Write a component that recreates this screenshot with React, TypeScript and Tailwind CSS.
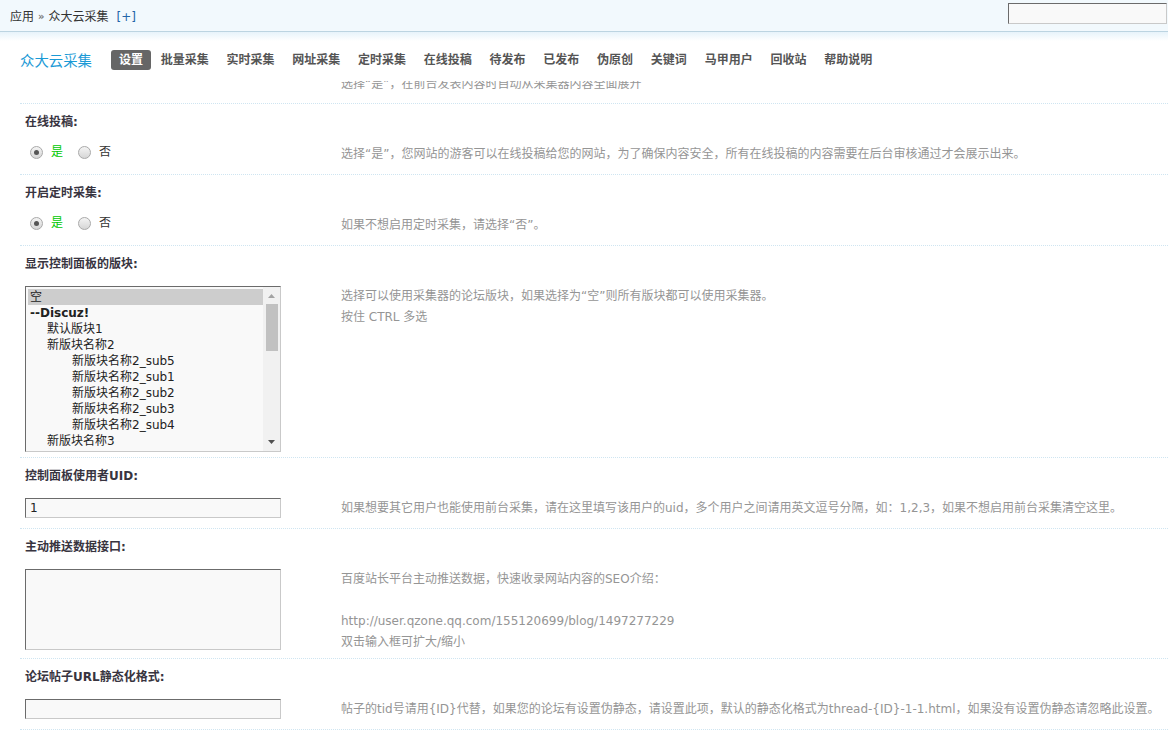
import React from "react";

const tabs = [
  "设置",
  "批量采集",
  "实时采集",
  "网址采集",
  "定时采集",
  "在线投稿",
  "待发布",
  "已发布",
  "伪原创",
  "关键词",
  "马甲用户",
  "回收站",
  "帮助说明",
];

const forums = [
  { t: "空", pad: "pl-[2px]", sel: true },
  { t: "--Discuz!", pad: "pl-[2px]", bold: true },
  { t: "默认版块1", pad: "pl-[19px]" },
  { t: "新版块名称2", pad: "pl-[19px]" },
  { t: "新版块名称2_sub5", pad: "pl-[44px]" },
  { t: "新版块名称2_sub1", pad: "pl-[44px]" },
  { t: "新版块名称2_sub2", pad: "pl-[44px]" },
  { t: "新版块名称2_sub3", pad: "pl-[44px]" },
  { t: "新版块名称2_sub4", pad: "pl-[44px]" },
  { t: "新版块名称3", pad: "pl-[19px]" },
];

const Radio = ({ checked }: { checked?: boolean }) => (
  <span className="w-[13px] h-[13px] rounded-full border border-[#a9a9a9] bg-[linear-gradient(#f4f4f4,#d6d6d6)] flex items-center justify-center">
    {checked && <span className="w-[5px] h-[5px] rounded-full bg-[#555]" />}
  </span>
);

const YesNo = () => (
  <div className="flex items-center h-[16px] pl-[5px]">
    <Radio checked />
    <span className="ml-[8px] text-[#00c800]">是</span>
    <span className="ml-[15px]">
      <Radio />
    </span>
    <span className="ml-[8px] text-[#333]">否</span>
  </div>
);

const boxBorder =
  "border border-t-[#6b6b6b] border-l-[#6b6b6b] border-r-[#c9c9c9] border-b-[#c9c9c9] bg-[#f9f9f9]";

const Row = ({
  label,
  h,
  control,
  tips,
  last,
}: {
  label: string;
  h: string;
  control: React.ReactNode;
  tips: React.ReactNode;
  last?: boolean;
}) => (
  <div
    className={`${h} border-t border-dotted border-[#cfe5f1] ${
      last ? "border-b" : ""
    }`}
  >
    <div className="h-[40px] pt-[9px] pl-[5px] leading-[18px] font-bold text-[#38343f]">
      {label}
    </div>
    <div className="flex items-start">
      <div className="w-[261px] pl-[5px] shrink-0">{control}</div>
      <div className="ml-[60px] leading-[21px] text-[#959595]">{tips}</div>
    </div>
  </div>
);

export default function App() {
  return (
    <div className="w-[1168px] h-[736px] overflow-hidden bg-white text-[12px] font-['DejaVu_Sans','Noto_Sans_CJK_SC',sans-serif]">
      {/* top bar */}
      <div className="h-[32px] bg-[#f2f9fd] border-b border-[#bcd4e1] flex items-start justify-between">
        <div className="pl-[10px] pt-[8px] leading-[18px] text-[#333] flex items-center">
          <span>应用</span>
          <span className="mx-[4px] text-[#777] text-[10px] font-bold">»</span>
          <span>众大云采集</span>
          <span className="ml-[8px] text-[#2366a8]">[+]</span>
        </div>
        <div className={`${boxBorder} w-[159px] h-[21px] mt-[3px] mr-px`} />
      </div>

      {/* nav */}
      <div className="h-[49px] bg-[linear-gradient(#e7f3fa,#fff_9px)] pt-[18px] pl-[20px] flex items-start">
        <span className="text-[14.4px] leading-[20px] text-[#1b9ad6] font-['Noto_Sans_CJK_SC',sans-serif]">
          众大云采集
        </span>
        <div className="ml-[19px] flex gap-[1.75px]">
          {tabs.map((t, i) => (
            <span
              key={t}
              className={`px-[8px] h-[20px] leading-[20px] rounded-[3px] font-bold ${
                i === 0 ? "bg-[#666] text-white" : "text-[#555]"
              }`}
            >
              {t}
            </span>
          ))}
        </div>
      </div>

      {/* settings */}
      <div className="pl-[20px]">
        <div className="h-[22px] overflow-hidden">
          <div className="-mt-[7px] ml-[321px] leading-[21px] text-[#959595]">
            选择“是”，在前台发表内容时自动从采集器内容全面展开
          </div>
        </div>

        <Row
          label="在线投稿:"
          h="h-[71px]"
          control={<YesNo />}
          tips="选择“是”，您网站的游客可以在线投稿给您的网站，为了确保内容安全，所有在线投稿的内容需要在后台审核通过才会展示出来。"
        />
        <Row
          label="开启定时采集:"
          h="h-[71px]"
          control={<YesNo />}
          tips="如果不想启用定时采集，请选择“否”。"
        />
        <Row
          label="显示控制面板的版块:"
          h="h-[212px]"
          control={
            <div className={`${boxBorder} w-[256px] h-[166px] flex p-[2px] pr-0`}>
              <div className="flex-1 text-[#222]">
                {forums.map((f) => (
                  <div
                    key={f.t}
                    className={`h-[16px] leading-[16px] ${f.pad} ${
                      f.sel ? "bg-[#cdcdcd]" : ""
                    } ${f.bold ? "font-bold" : ""}`}
                  >
                    {f.t}
                  </div>
                ))}
              </div>
              <div className="w-[17px] -mt-[2px] -mb-[2px] bg-[#f1f1f1] flex flex-col items-center">
                <svg width="7" height="4" viewBox="0 0 7 4" className="mt-[7px]">
                  <path d="M0 4 L3.5 0 L7 4 Z" fill="#a3a3a3" />
                </svg>
                <div className="w-[12px] h-[47px] mt-[6px] bg-[#c1c1c1]" />
                <div className="flex-1" />
                <svg width="7" height="4" viewBox="0 0 7 4" className="mb-[7px]">
                  <path d="M0 0 L3.5 4 L7 0 Z" fill="#505050" />
                </svg>
              </div>
            </div>
          }
          tips={
            <>
              <div>选择可以使用采集器的论坛版块，如果选择为“空”则所有版块都可以使用采集器。</div>
              <div>按住 CTRL 多选</div>
            </>
          }
        />
        <Row
          label="控制面板使用者UID:"
          h="h-[71px]"
          control={
            <div className={`${boxBorder} w-[256px] h-[20px] pl-[4px] leading-[18px] text-[#222]`}>
              1
            </div>
          }
          tips="如果想要其它用户也能使用前台采集，请在这里填写该用户的uid，多个用户之间请用英文逗号分隔，如：1,2,3，如果不想启用前台采集清空这里。"
        />
        <Row
          label="主动推送数据接口:"
          h="h-[130px]"
          control={<div className={`${boxBorder} w-[256px] h-[81px]`} />}
          tips={
            <>
              <div>百度站长平台主动推送数据，快速收录网站内容的SEO介绍：</div>
              <div>&nbsp;</div>
              <div>http://user.qzone.qq.com/155120699/blog/1497277229</div>
              <div>双击输入框可扩大/缩小</div>
            </>
          }
        />
        <Row
          label="论坛帖子URL静态化格式:"
          h="h-[72px]"
          last
          control={<div className={`${boxBorder} w-[256px] h-[20px]`} />}
          tips="帖子的tid号请用{ID}代替，如果您的论坛有设置伪静态，请设置此项，默认的静态化格式为thread-{ID}-1-1.html，如果没有设置伪静态请忽略此设置。"
        />
      </div>
    </div>
  );
}
